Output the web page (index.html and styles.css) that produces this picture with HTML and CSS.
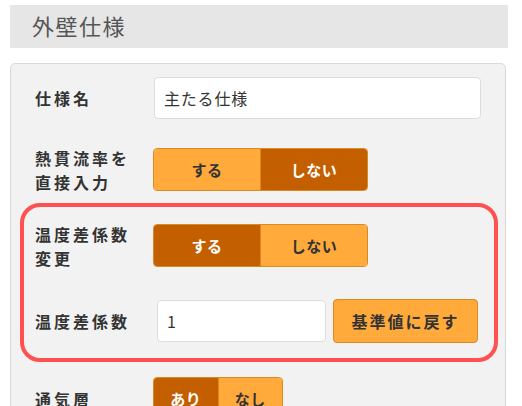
FILE: index.html
```html
<!DOCTYPE html>
<html lang="ja">
<head>
<meta charset="utf-8">
<link rel="stylesheet" href="styles.css">
</head>
<body>
<div class="header">外壁仕様</div>
<div class="panel">
  <div class="row row-name">
    <div class="label">仕様名</div>
    <div class="control"><div class="input input-name">主たる仕様</div></div>
  </div>
  <div class="row row-u">
    <div class="label">熱貫流率を<br>直接入力</div>
    <div class="control">
      <div class="toggle">
        <div class="opt light">する</div>
        <div class="opt dark">しない</div>
      </div>
    </div>
  </div>
  <div class="highlight">
    <div class="row row-temp">
      <div class="label">温度差係数<br>変更</div>
      <div class="control">
        <div class="toggle">
          <div class="opt dark">する</div>
          <div class="opt light">しない</div>
        </div>
      </div>
    </div>
    <div class="row row-coef">
      <div class="label">温度差係数</div>
      <div class="control">
        <div class="input input-coef">1</div>
        <div class="btn">基準値に戻す</div>
      </div>
    </div>
  </div>
  <div class="row row-vent">
    <div class="label">通気層</div>
    <div class="control">
      <div class="toggle small">
        <div class="opt dark">あり</div>
        <div class="opt light">なし</div>
      </div>
    </div>
  </div>
</div>
</body>
</html>
```
FILE: styles.css
```css
* { box-sizing: border-box; }
html, body { margin: 0; padding: 0; background: #fff; }
body {
  font-family: "Noto Sans CJK JP", "Noto Sans", sans-serif;
  color: #333;
  width: 522px;
  height: 406px;
  overflow: hidden;
}
.header {
  margin: 5px 14px 0 10px;
  height: 43px;
  background: #e6e6e6;
  padding-left: 22px;
  font-size: 22px;
  line-height: 41px;
  color: #555;
  letter-spacing: 1.5px;
}
.panel {
  margin: 15px 16px 0 10px;
  background: #f2f2f2;
  border: 1px solid #d9d9d9;
  border-radius: 5px;
  padding: 13px 7px 20px 24px;
  height: 400px;
}
.row {
  display: grid;
  grid-template-columns: 118px 1fr;
  align-items: center;
}
.label {
  font-size: 16px;
  font-weight: bold;
  letter-spacing: 3px;
  line-height: 24px;
  margin: -3px 0;
  color: #333;
}
.control { display: flex; align-items: center; }
.input {
  background: #fff;
  border: 1px solid #ddd;
  border-radius: 4px;
  height: 42px;
  font-size: 16px;
  letter-spacing: 0.8px;
  line-height: 40px;
  padding-left: 9px;
  color: #333;
}
.input-name { width: 327px; margin-left: 1px; }
.row-u { margin-top: 29px; }
.toggle {
  display: flex;
  width: 215px;
  height: 43px;
  border: 1px solid #d98a20;
  border-radius: 4px;
  overflow: hidden;
}
.opt {
  flex: 1;
  display: flex;
  align-items: center;
  justify-content: center;
  font-size: 15px;
  font-weight: bold;
  letter-spacing: 0.5px;
}
.opt.light { background: #ffaa3b; color: #333; }
.opt.dark { background: #c45f00; color: #fff; }
.opt + .opt { border-left: 1px solid #d98a20; }
.highlight {
  margin: 12px 0 0 -15px;
  width: 478px;
  border: 4px solid #ff5151;
  border-radius: 20px;
  padding: 17px 0 15px 11px;
}
.row-coef { margin-top: 32px; }
.input-coef { width: 169px; margin-left: 4px; }
.btn {
  margin-left: 7px;
  width: 145px;
  height: 44px;
  background: #ffaa3b;
  border: 1px solid #d98a20;
  border-radius: 4px;
  display: flex;
  align-items: center;
  justify-content: center;
  font-size: 16px;
  font-weight: bold;
  letter-spacing: 2px;
  color: #333;
}
.row-vent { margin-top: 15px; }
.toggle.small { width: 130px; }
```
